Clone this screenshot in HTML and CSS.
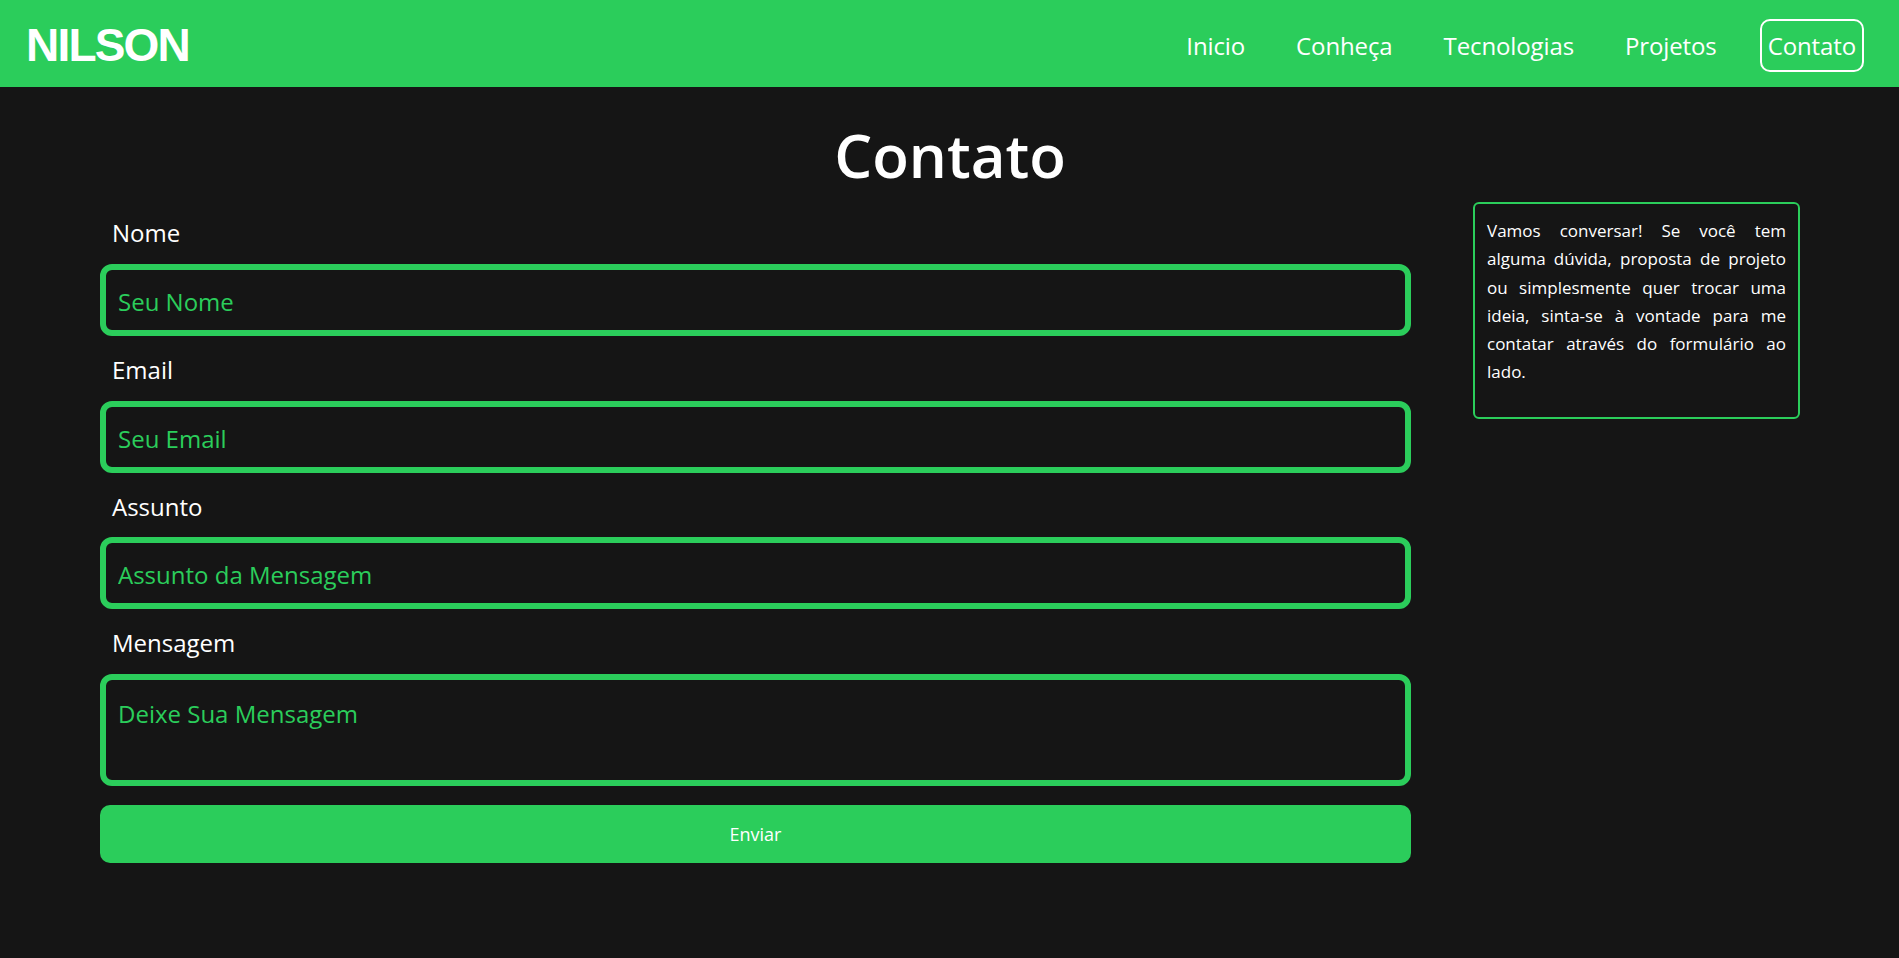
FILE: index.html
```html
<!DOCTYPE html>
<html lang="pt-BR">
<head>
<meta charset="utf-8">
<title>Contato - Nilson</title>
<link rel="stylesheet" href="styles.css">
</head>
<body>
<header class="topbar">
  <a class="logo" href="#">NILSON</a>
  <nav>
    <ul class="menu">
      <li><a class="menu-link" href="#">Inicio</a></li>
      <li><a class="menu-link" href="#">Conheça</a></li>
      <li><a class="menu-link" href="#">Tecnologias</a></li>
      <li><a class="menu-link" href="#">Projetos</a></li>
      <li><a class="menu-link active" href="#">Contato</a></li>
    </ul>
  </nav>
</header>
<main class="page">
  <h1 class="title">Contato</h1>
  <div class="content">
    <form class="form">
      <label class="label" for="nome">Nome</label>
      <input class="field" id="nome" type="text" placeholder="Seu Nome">
      <label class="label" for="email">Email</label>
      <input class="field" id="email" type="email" placeholder="Seu Email">
      <label class="label" for="assunto">Assunto</label>
      <input class="field" id="assunto" type="text" placeholder="Assunto da Mensagem">
      <label class="label" for="mensagem">Mensagem</label>
      <textarea class="field area" id="mensagem" placeholder="Deixe Sua Mensagem"></textarea>
      <button class="send" type="submit">Enviar</button>
    </form>
    <aside class="note">
      <p>Vamos conversar! Se você tem alguma dúvida, proposta de projeto ou simplesmente quer trocar uma ideia, sinta-se à vontade para me contatar através do formulário ao lado.</p>
    </aside>
  </div>
</main>
</body>
</html>
```
FILE: styles.css
```css
* { box-sizing: border-box; }
body {
  margin: 0;
  background: #151515;
  color: #fff;
  font-family: "Open Sans", "Noto Sans", sans-serif;
}
.topbar {
  height: 87px;
  background: #2bcd5b;
  display: flex;
  align-items: center;
  justify-content: space-between;
  padding: 0 35px 0 26px;
}
.logo {
  font-family: "Liberation Sans", Arial, sans-serif;
  font-weight: 700;
  font-size: 46px;
  letter-spacing: -1.8px;
  color: #fff;
  text-decoration: none;
  line-height: 1;
  margin-top: 2px;
}
.menu {
  list-style: none;
  margin: 3px 0 0;
  padding: 0;
  display: flex;
  gap: 35px;
}
.menu-link {
  display: block;
  font-size: 24px;
  line-height: 29px;
  letter-spacing: -0.12px;
  color: #fff;
  text-decoration: none;
  padding: 10px 6px;
  border: 2px solid transparent;
  border-radius: 10px;
}
.menu-link.active { border-color: #fff; }
.page { padding: 0 99px 0 100px; }
.title {
  margin: 32px 0 0;
  text-align: center;
  font-size: 60px;
  line-height: 72px;
  font-weight: 600;
}
.content {
  display: flex;
  align-items: flex-start;
  gap: 62px;
  margin-top: 11px;
}
.form {
  flex: 0 0 1311px;
  display: flex;
  flex-direction: column;
  padding-top: 17px;
}
.label {
  display: block;
  padding-left: 12px;
  font-size: 24px;
  line-height: 28.8px;
  margin-bottom: 16px;
}
.field {
  display: block;
  width: 100%;
  height: 72px;
  margin: 0 0 20px;
  padding: 3px 12px 0;
  border: 6px solid #2bcd5b;
  border-radius: 12px;
  background: transparent;
  color: #2bcd5b;
  font-family: inherit;
  font-size: 24px;
  outline: none;
}
.field::placeholder { color: #2bcd5b; opacity: 1; }
.area {
  height: 112px;
  padding: 17px 12px 15px;
  resize: none;
  margin-bottom: 19px;
  line-height: normal;
}
.send {
  height: 58px;
  width: 100%;
  border: none;
  border-radius: 10px;
  background: #2bcd5b;
  color: #fff;
  font-family: inherit;
  font-size: 18px;
}
.note {
  width: 327px;
  border: 2px solid #2bcd5b;
  border-radius: 6px;
  padding: 13px 12px 12px;
}
.note p {
  margin: 0 0 18px;
  font-size: 17px;
  line-height: 28.3px;
  text-align: justify;
}
```
